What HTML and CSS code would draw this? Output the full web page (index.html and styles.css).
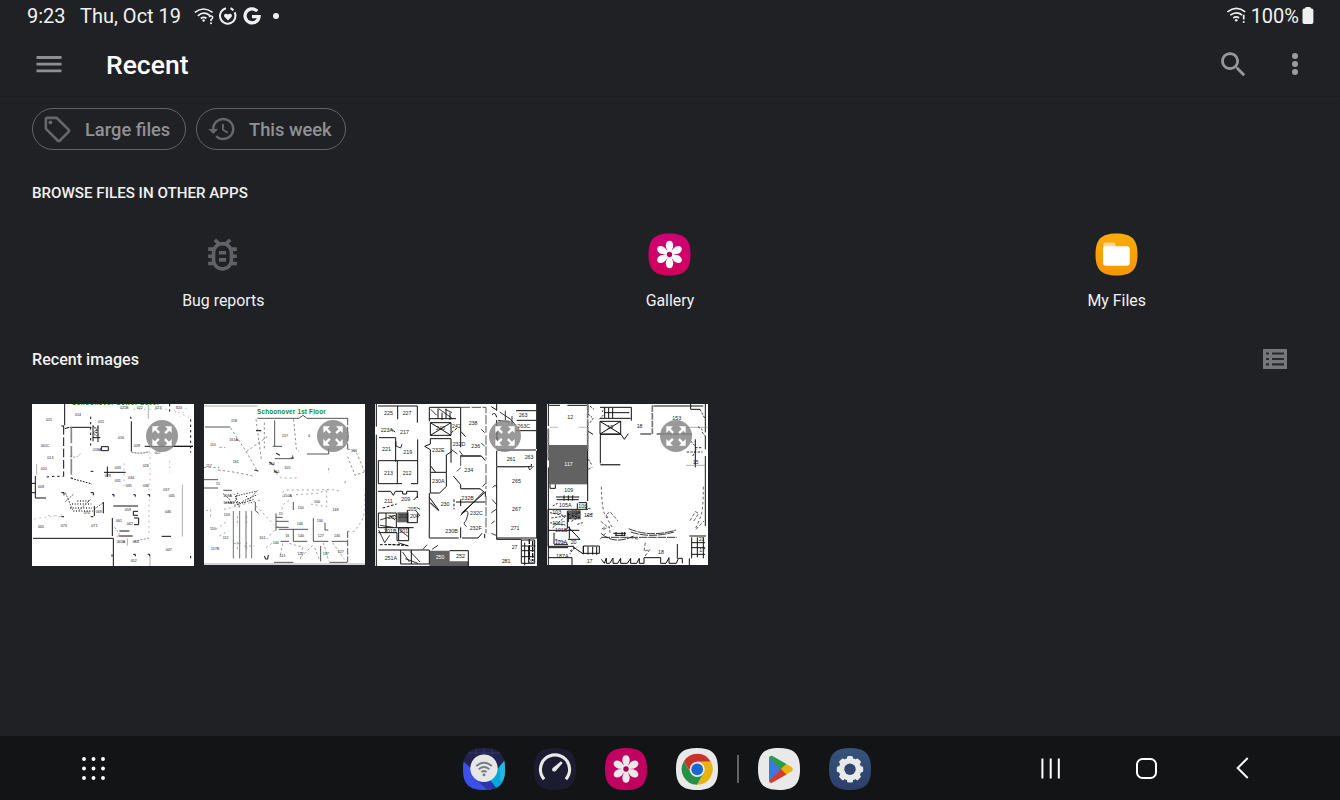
FILE: index.html
```html
<!DOCTYPE html>
<html lang="en">
<head>
<meta charset="utf-8">
<title>Recent</title>
<link rel="stylesheet" href="styles.css">
</head>
<body>
<svg class="defs" aria-hidden="true">
  <defs>
    <linearGradient id="pink" x1="0" y1="0" x2="0" y2="1"><stop offset="0" stop-color="#cf0075"/><stop offset="1" stop-color="#d0005c"/></linearGradient>
    <linearGradient id="amber" x1="0" y1="0" x2="0" y2="1"><stop offset="0" stop-color="#f9ac08"/><stop offset="1" stop-color="#f89600"/></linearGradient>
    <linearGradient id="navy" x1="0" y1="0" x2="0" y2="1"><stop offset="0" stop-color="#37547a"/><stop offset="1" stop-color="#2b3f69"/></linearGradient>
    <path id="squircle" d="M21 0C36.200 0 42 5.800 42 21S36.200 42 21 42 0 36.200 0 21 5.800 0 21 0Z"/>
    <clipPath id="squircle-clip"><use href="#squircle"/></clipPath>
    <g id="petals">
      <g id="petal-pair"><ellipse cx="21" cy="11.900" rx="3.700" ry="4.700"/><ellipse cx="21" cy="30.100" rx="3.700" ry="4.700"/><path d="M17.600 13.500L20 21h2l2.400-7.500zM17.600 28.500L20 21h2l2.400 7.500z"/></g>
      <use href="#petal-pair" transform="rotate(60 21 21)"/>
      <use href="#petal-pair" transform="rotate(120 21 21)"/>
    </g>
    <symbol id="expand" viewBox="-48 -48 96 96">
      <circle r="48" fill="#858585" fill-opacity=".84"/>
      <g id="arrow" fill="#fff"><path d="M-29-29h20l-7 7 10 10-5 5-10-10-8 8z"/></g>
      <use href="#arrow" transform="rotate(90)"/><use href="#arrow" transform="rotate(180)"/><use href="#arrow" transform="rotate(270)"/>
    </symbol>
  </defs>
</svg>

<header class="status">
  <span class="clock">9:23</span>
  <span class="date">Thu, Oct 19</span>
  <svg class="status-icons" width="90" height="22" viewBox="192 5 90 22">
    <g fill="none" stroke="#f0f0f0" stroke-width="1.700">
      <path d="M194.800 12.400Q203.500 5.600 212.600 12.400M197.800 15.800Q203.700 10.800 209.800 15.500M200.800 18.500Q203.700 16.300 206.500 18.300"/>
      <path d="M209.300 17.200q.4-1.500 1.900-1.300 1.700.3 1.500 1.700-.2 1.200-1.700 2v1.700" stroke-width="1.500"/>
      <path d="M226 8.200a7.800 7.800 0 1 0 8.700 4.100M230.500 8.300a7.800 7.800 0 0 1 2.900 2" stroke-width="2"/>
    </g>
    <g fill="#f0f0f0"><circle cx="203.600" cy="20.500" r="1.200"/><circle cx="211" cy="23.200" r="1"/><path d="M228 20.400l-3.400-3.400c-1.800-2 .9-4.800 3.400-2.500 2.500-2.300 5.200.5 3.400 2.500z"/><circle cx="276" cy="16" r="3"/></g>
    <path d="M257.200 11.100A7 7 0 1 0 259 16.700H252" fill="none" stroke="#f0f0f0" stroke-width="3.300"/>
  </svg>
  <span class="spacer"></span>
  <svg class="signal" width="22" height="20" viewBox="1225 6 22 20">
    <g fill="none" stroke="#f0f0f0" stroke-width="1.700"><path d="M1227.400 11.900Q1236.500 5 1245.200 11.900M1230.300 15.200Q1236.300 10.500 1242.100 15M1233.300 18Q1236.200 15.800 1239 18M1243.700 14.800v4.700"/></g>
    <circle cx="1236.200" cy="20.300" r="1.300" fill="#f0f0f0"/><circle cx="1243.700" cy="22" r="1" fill="#f0f0f0"/>
  </svg>
  <span class="percent">100%</span>
  <svg class="battery" width="12" height="17" viewBox="0 0 12 17"><path d="M3 1.500Q3 0 4.500 0h3Q9 0 9 1.500h.7q1.700 0 1.700 1.700v12q0 1.800-1.700 1.800H2.200Q.5 17 .5 15.200v-12q0-1.700 1.700-1.700z" fill="#f0f0f0"/></svg>
</header>

<div class="appbar">
  <svg class="menu" width="26" height="18" viewBox="0 0 26 18"><path d="M.5 2.500h25M.5 9.200h25M.5 15.800h25" stroke="#8e8f92" stroke-width="2.800"/></svg>
  <h1 class="title">Recent</h1>
  <span class="spacer"></span>
  <svg class="search" width="33" height="33" viewBox="0 0 24 24"><path fill="#97989a" d="M15.500 14h-.79l-.28-.27C15.410 12.590 16 11.110 16 9.500 16 5.910 13.090 3 9.500 3S3 5.910 3 9.500 5.910 16 9.500 16c1.610 0 3.090-.59 4.230-1.570l.27.28v.79l5 4.990L20.490 19l-4.990-5zm-6 0C7.010 14 5 11.990 5 9.500S7.010 5 9.500 5 14 7.010 14 9.500 11.990 14 9.500 14z"/></svg>
  <svg class="more" width="8" height="24" viewBox="0 0 8 24"><g fill="#9c9c9f"><circle cx="4" cy="4" r="3"/><circle cx="4" cy="12" r="3"/><circle cx="4" cy="20" r="3"/></g></svg>
</div>

<main class="content">
  <div class="chips">
    <div class="chip chip-large">
      <svg width="31" height="31" viewBox="0 0 24 24"><path fill="#66676a" d="M21.410 11.580l-9-9C12.050 2.220 11.550 2 11 2H4c-1.100 0-2 .9-2 2v7c0 .55.22 1.050.59 1.420l9 9c.36.36.86.58 1.410.58s1.050-.22 1.410-.59l7-7c.37-.36.59-.86.59-1.410s-.23-1.060-.59-1.420zM13 20.010L4 11V4h7v-.01l9 9-7 7.020z"/><circle cx="6.500" cy="6.500" r="1.500" fill="#66676a"/></svg>
      <span>Large files</span>
    </div>
    <div class="chip chip-week">
      <svg width="30" height="30" viewBox="0 0 24 24"><path fill="#66676a" d="M13 3c-4.970 0-9 4.030-9 9H1l3.890 3.890.07.14L9 12H6c0-3.870 3.130-7 7-7s7 3.130 7 7-3.130 7-7 7c-1.930 0-3.680-.79-4.940-2.060l-1.420 1.420C8.270 19.990 10.510 21 13 21c4.970 0 9-4.030 9-9s-4.030-9-9-9zm-1 5v5l4.280 2.540.72-1.210-3.500-2.080V8H12z"/></svg>
      <span>This week</span>
    </div>
  </div>

  <h2 class="section">BROWSE FILES IN OTHER APPS</h2>

  <div class="apps">
    <div class="app">
      <svg width="43" height="43" viewBox="0 0 24 24"><path fill="#5f6368" d="M20 8h-2.810c-.45-.78-1.070-1.450-1.820-1.960L17 4.410 15.590 3l-2.170 2.170C12.960 5.060 12.490 5 12 5s-.96.06-1.410.17L8.410 3 7 4.410l1.620 1.630C7.880 6.550 7.260 7.220 6.810 8H4v2h2.090c-.05.33-.09.66-.09 1v1H4v2h2v1c0 .34.04.67.09 1H4v2h2.810c1.040 1.790 2.970 3 5.190 3s4.150-1.210 5.190-3H20v-2h-2.090c.05-.33.09-.66.09-1v-1h2v-2h-2v-1c0-.34-.04-.67-.09-1H20V8zm-4 7c0 2.210-1.790 4-4 4s-4-1.790-4-4v-4c0-2.210 1.790-4 4-4s4 1.790 4 4v4zm-6-1h4v2h-4zm0-4h4v2h-4z"/></svg>
      <span class="app-name">Bug reports</span>
    </div>
    <div class="app">
      <svg width="43" height="43" viewBox="-.5 -.5 43 43"><use href="#squircle" fill="url(#pink)"/><use href="#petals" fill="#fff"/><circle cx="21" cy="21" r="2.700" fill="#b5005b"/></svg>
      <span class="app-name">Gallery</span>
    </div>
    <div class="app">
      <svg width="43" height="43" viewBox="-.5 -.5 43 43"><use href="#squircle" fill="url(#amber)"/><path d="M7.500 17v-5.500Q7.500 9 10 9h8.200Q20 9 20 11v6z" fill="#fcd78c"/><rect x="7.500" y="12.800" width="26.700" height="19.500" rx="3.200" fill="#fff"/></svg>
      <span class="app-name">My Files</span>
    </div>
  </div>

  <div class="section-row">
    <h2 class="recent-label">Recent images</h2>
    <svg width="24" height="20" viewBox="0 0 24 20"><rect width="24" height="20" rx=".6" fill="#75777a"/><path d="M3 4.500h3M3 10h3M3 15.300h3M9 4.500h12M9 10h12M9 15.300h12" stroke="#292a2e" stroke-width="2.200"/></svg>
  </div>

  <div class="thumbs">
    <div class="thumb wide">
      <svg class="plan" width="162" height="162" viewBox="24 24 486 486">
        <rect x="24" y="24" width="486" height="486" fill="#fff"/>
        <text class="plan-title" x="144" y="26" textLength="260">Schoonover Lower Level</text>
        <g fill="none" stroke="#111" stroke-width="3">
          <path d="M122 24v64M138 94h64M207 88v48M222 88v50M207 125h22M322 76v90M362 151h145M442 151h65M240 229h65M250 212v30M268 330h74M27 427h241M268 427v83M265 366v54M34 240v66h32M24 262h10M24 290h10M286 405h30M284 420h42M232 152v12h21v-12zM342 346h-14v12h14M330 366h14v20h-14M238 318v34M211 330v30M413 421h28"/>
          <path d="M119 90v152" stroke-dasharray="26 8"/>
          <path d="M142 94v154" stroke="#888" stroke-width="5" stroke-dasharray="48 8 34 4"/>
          <path d="M142 247l62 17" stroke-dasharray="5 4"/>
          <path d="M68 243l22-2h28M200 62v90M320 62l2 14M437 24v26M500 70v100M500 480v15" stroke-dasharray="7 9"/>
          <path d="M322 168q30 8 54-2M207 90l14 12-14 8 14 12M124 290l22 52M148 295l-24 22M210 340l28-20M200 310l-36 34" stroke-width="2" stroke-dasharray="6 3"/>
          <path d="M475 266v156M310 427v22M373 24v44M378 480v30M38 204v32" stroke="#888" stroke-width="2"/>
          <path d="M144 324h58M138 336h66M148 345h58M160 315h38M212 94l10 24M212 118l10-24" stroke="#444" stroke-width="4" stroke-dasharray="3 5"/>
          <path d="M30 369l92-14M72 358l45 5M378 152v110M375 262v160M437 195v34M300 202v68M328 40h110M448 42l46 22M460 30l-10 30M488 35l-20 28" stroke="#999" stroke-width="2" stroke-dasharray="5 11"/>
          <path d="M112 90h8M200 226h8M112 290h8v8M200 290h8v8M112 362h8M200 362h8M264 296h6v6M328 296h6v6M371 296h6v6M264 475v7M328 475h6v6M371 475h6v6M122 98l14-4" />
          <path d="M272 394l14 20-8 9M330 436l46-10M138 180q20 10 34-10" stroke="#666" stroke-width="2" stroke-dasharray="6 4"/>
        </g>
        <g class="lbl small"><text x="153" y="60">014</text><text x="66" y="75">021</text><text x="222" y="80">015</text><text x="51" y="153">001C</text><text x="70" y="188">013</text><text x="50" y="222">010</text><text x="42" y="276">009</text><text x="288" y="38">021B</text><text x="338" y="38">022</text><text x="394" y="38">023</text><text x="456" y="38">024</text><text x="282" y="130">016</text><text x="207" y="166">018A</text><text x="330" y="154">028</text><text x="392" y="173">027</text><text x="356" y="212">026</text><text x="272" y="219">033</text><text x="312" y="249">034</text><text x="272" y="257">031</text><text x="242" y="242">029</text><text x="305" y="272">035</text><text x="356" y="272">036</text><text x="418" y="286">037</text><text x="434" y="304">045</text><text x="302" y="346">059</text><text x="423" y="352">046</text><text x="42" y="395">005</text><text x="110" y="394">073</text><text x="202" y="393">071</text><text x="276" y="377">061</text><text x="308" y="387">062</text><text x="278" y="441">063A</text><text x="326" y="440">064</text><text x="425" y="465">047</text><text x="320" y="497">052</text><text x="179" y="355">070</text><text x="215" y="350">069</text></g>
      </svg>
      <svg class="badge" width="32" height="32"><use href="#expand"/></svg>
    </div>

    <div class="thumb">
      <svg class="plan" width="161" height="161" viewBox="24 24 483 483">
        <rect x="24" y="24" width="483" height="483" fill="#fff"/>
        <path d="M24 30h160M24 504h483" stroke="#aaa" stroke-width="3"/>
        <text class="plan-title" x="183" y="53" textLength="206">Schoonover 1st Floor</text>
        <g fill="none" stroke="#333" stroke-width="2.500">
          <path d="M184 67h125l12-9 12 9h122M236 73v78M230 151h28M236 188h54v-10M333 174h65v-17M27 93h76M24 251h42M24 276h42M82 283h26M292 318v24M248 400h88M292 400v36h42M352 366v70h45M407 436h46M374 450v46M234 499h58M400 499h54M178 318v26l10 8M240 352v52M240 376h38M240 394h38M240 364h20M387 380v22h10M254 436h25"/>
          <path d="M455 67v92M455 406v92" stroke-dasharray="20 5"/>
          <path d="M112 345v142M131 345v142M150 345v142M167 345v142" stroke="#555"/>
          <path d="M104 96l46 70 36 62M293 70l8 90 8 6M66 222q70 8 110 20M24 214h46M152 166l62-44M180 70l16 120M205 80v80M455 160q22 0 30 18l20 48M455 182l22 56 28-10" stroke="#555" stroke-width="2" stroke-dasharray="7 7"/>
          <path d="M262 304q-10-16 10-22h90q60-4 74 6M232 204q0 30 26 42h48M258 340q2-24 30-28M300 296l64-4 28-10M392 284v48l-50-8M455 406h20l22-30 10-34V284M180 330l54 56M212 430l34-40M210 455l20-15M84 340l110-28M30 344l14-4v28M60 400l30-22M70 420l28-15" stroke="#777" stroke-width="2" stroke-dasharray="6 9"/>
          <path d="M82 293l22 20M88 320h60M120 300l60-14M126 290l-10 30M150 300l20 24M140 316l44-20M115 328l60-18M130 334l-14-40M184 284l-24 26" stroke-width="3" stroke-dasharray="4 4"/>
          <path d="M124 360v30M152 360v30M124 438v25M152 438v25M112 442h26M145 450h30M260 442l-8 42M280 442l40 12-8 42M350 448l-34 34M382 440l16 55M410 440l35 50M455 150v15M398 216v15M447 262v-6h8M70 154h18M356 455l14 36" stroke="#777" stroke-width="2" stroke-dasharray="8 6"/>
          <path d="M205 480l4 9h6l2-12M240 172l12 6M220 198l10 8M235 225l10 6M175 222l12 3M180 104h16M284 186h10" stroke-width="3.500"/>
        </g>
        <g class="lbl small"><text x="105" y="78">158</text><text x="100" y="135">161A</text><text x="42" y="150">110</text><text x="110" y="202">161</text><text x="30" y="214">117</text><text x="60" y="266">15</text><text x="82" y="302">108A</text><text x="82" y="323">108AX</text><text x="258" y="122">157</text><text x="336" y="122">4</text><text x="265" y="218">105</text><text x="218" y="207">154</text><text x="232" y="231">155</text><text x="305" y="340">150</text><text x="354" y="320">100</text><text x="409" y="345">148</text><text x="302" y="386">146</text><text x="362" y="378">134</text><text x="268" y="422">16</text><text x="306" y="422">140</text><text x="365" y="422">127</text><text x="414" y="422">130</text><text x="248" y="358">15</text><text x="42" y="401">110</text><text x="80" y="430">112</text><text x="45" y="463">117B</text><text x="190" y="428">101</text><text x="230" y="444">140</text><text x="250" y="482">141</text><text x="304" y="478">122</text><text x="380" y="477">137</text><text x="425" y="472">127</text><text x="262" y="302">150A</text><text x="83" y="360">103</text><text x="465" y="168">166</text></g>
      </svg>
      <svg class="badge" width="32" height="32"><use href="#expand"/></svg>
    </div>

    <div class="thumb wide">
      <svg class="plan" width="162" height="162" viewBox="21 24 486 486">
        <rect x="21" y="24" width="486" height="486" fill="#fff"/>
        <g fill="#626262"><path d="M186 464h59v32h56v14H184z"/><rect x="88" y="349" width="34" height="30"/></g>
        <g fill="none" stroke="#111" stroke-width="3">
          <path d="M25 24v68M25 116v394M30 30h118v50M89 30v40M33 125h50v72M31 194h118v-64M31 194v69h57v-69M88 263h14M149 194v69h-20M30 286h38l8 12 6-12M82 286h22v8h12v-8h32v20M149 300l-12 12M31 351h54v44H31zM54 351v60M85 395h52M118 350v30h30v-28M31 410h56v24h35v-38h-30v38M31 462h153v42H98v-42M130 462v42M245 464h56v46M184 34h94v120M184 34v42M184 68h80M210 38v30M222 50v22M234 38v30M246 50v22M187 80h62v38h-62zM187 80l62 38M249 80l-62 38M187 128h62v72M187 128v16l-17 7 17 10v48l16 20M187 209v20h48v-52l18-12M187 229v62h28l20-20v-42M184 291v135h88M282 426h48l12-14M350 426v-12M184 304l28 38M278 106l15 16M278 180h62l12 14M256 240l22 26v12h58l14 12M352 286v16M280 352l70-62M278 358l68-70M278 394v32M264 318h88M278 310v20M386 24v20M370 32l16 10M372 56q10-10 14 8M386 72v80M386 162h118M444 44h60M446 73h58M504 104h-60M386 165v45M386 212h104v-8M506 24v135M506 164v264M386 212v218h74M386 426h118M460 432h40v70h-40zM470 440v68M482 450v50M462 450h40M462 464h38M462 482h36"/>
          <path d="M278 34h76v76M354 118v72M354 204v75M354 300v112M184 400v25M278 182v34l-12 10" stroke="#555" stroke-dasharray="28 5"/>
          <path d="M187 320l26 24M276 180h62M386 212h88M278 278h58" stroke="#444" stroke-width="4"/>
          <path d="M188 40l18 18M212 38l42 30M232 40l20 10M395 48l30 20M390 73l35 5M412 44v28M432 60v24M423 65l20 22M104 468l20 30M112 488l38 14M126 466l30 32M32 402l18 38 15-22M95 402l26 20M90 440l32 10M36 372l45-14M36 388l40 6M66 360l15 12M156 360l-12-16M156 340l-10-6M274 164l10 14M250 160l18 14M340 100l10 10M340 142l10 8M344 272l8-10M165 460l12-14M192 460l18-12M374 275q10-14 12 0M372 310l14 16M380 375l-10 8M370 350l14-10M370 412l14 6M84 136v14l14 6 4-12M70 100l12 8M480 210l5 12 12-12M286 350q14-12 14 4l-6 20q-12 8 2 18" stroke-width="2.500"/>
          <path d="M44 336l42-12M118 342v14M60 445l60 4M36 446h76M250 110l20-16M258 310v30" stroke-dasharray="8 5"/>
          <path d="M388 104v34M484 430v60M494 435v60" stroke-width="4" stroke-dasharray="14 4"/>
        </g>
        <g class="lbl"><text x="48" y="57">225</text><text x="104" y="57">227</text><text x="38" y="108">223A</text><text x="96" y="114">217</text><text x="42" y="164">221</text><text x="106" y="173">219</text><text x="48" y="237">213</text><text x="104" y="237">212</text><text x="49" y="322">211</text><text x="100" y="315">209</text><text x="119" y="344">205</text><text x="126" y="366">204</text><text x="92" y="365">202</text><text x="48" y="411">201B</text><text x="94" y="411">201</text><text x="50" y="492">251A</text><text x="302" y="87">238</text><text x="310" y="155">236</text><text x="254" y="150">232D</text><text x="192" y="169">232E</text><text x="192" y="262">230A</text><text x="289" y="228">234</text><text x="218" y="329">230</text><text x="280" y="312">232B</text><text x="306" y="358">232C</text><text x="305" y="402">232F</text><text x="232" y="412">230B</text><text x="452" y="64">263</text><text x="448" y="95">263C</text><text x="416" y="196">261</text><text x="470" y="188">263</text><text x="432" y="261">265</text><text x="432" y="344">267</text><text x="428" y="401">271</text><text x="431" y="459">27</text><text x="401" y="501">281</text><text x="264" y="486">252</text><text class="inv" x="203" y="489">250</text><text x="204" y="102">240</text><text x="60" y="370">203</text><text x="480" y="502">20</text><text x="252" y="95">242</text></g>
      </svg>
      <svg class="badge" width="32" height="32"><use href="#expand"/></svg>
    </div>

    <div class="thumb">
      <svg class="plan" width="161" height="161" viewBox="21 24 483 483">
        <rect x="21" y="24" width="483" height="483" fill="#fff"/>
        <g fill="#626262"><rect x="27" y="147" width="116" height="118"/><rect x="84" y="343" width="38" height="27"/></g>
        <g fill="none" stroke="#111" stroke-width="3">
          <path d="M24 28h36M82 28h62v22M25 24v66M25 98v95M25 214v293M143 80v235M143 105l16 10M30 265v12h16v-12M24 340h120M24 340v63h94M82 344v54M24 403v48h78M82 390l38 40h-36M88 392v36M42 410v34M42 446h42M98 452l32 22v-24h48v22h-48v-22M144 452v24M158 452v24M170 452v24M24 485h72v22M180 34h94v40M194 34v32M206 36v30M218 36v30M180 67h92M192 50h76M180 76h62v38h-62zM180 76l62 38M242 76l-62 38M181 114v88M181 206h60M181 115h62l10 15 12-17M301 114h33M340 30h150M452 24v16h28M350 114h106M466 130v84M496 24v85M496 120v40M496 180v210M448 420h50M455 424v63M490 424v63M472 424v60M455 440h40M455 455h40M455 475h40M448 487v20M412 444v44"/>
          <path d="M143 24v140M25 98v95M337 28v86" stroke="#777" stroke-width="5" stroke-dasharray="20 3"/>
          <path d="M438 208h58M438 94h65M181 208h60" stroke="#888" stroke-width="2"/>
          <path d="M184 490l9 12 6-16v16h10l10-16v16h14l9-15v15h20l10-15v15h18l8-15v15h14v-17h50v17h16l9-17v17h22l6-15h12v15"/>
          <path d="M183 412q40 36 98 8M185 424h226M266 398q65 28 142 4M272 408q60 20 130 0" stroke-width="2.500" stroke-dasharray="25 3"/>
          <path d="M184 272q2 77 14 90l22 38M490 272q0 70-8 90l-15 35" stroke-width="2" stroke-dasharray="8 7"/>
          <path d="M200 355l10-8 24 28M204 366l-6-10M450 374l16-27 10 5-16 25M468 400l24-25M182 376l18 14-16 10M190 400l18-8 2 18M180 430l18-20M270 425l28 5M316 440l-4 26 18-6-16 22" stroke="#444" stroke-width="2.500" stroke-dasharray="10 5"/>
          <path d="M30 350l48 10M34 366l42-6M30 380l46 8M38 395l40-35M46 430l36 12M90 465l20-12M104 454l-15 20M84 354l36 12M88 368l32-20M94 376l26-14M38 330l15-8M112 385l16-5M134 335l20 4M144 54l12 10M150 80l12-16M145 220l12-6M145 190l10 16M480 40l16 30M474 92l14 10M486 108l10 12M452 135l14 16M440 168h48M466 155h20M458 180l12-20M150 30l12 10M140 360l16-6M186 48l8-12M178 70l14-15" stroke-width="2.500" stroke-dasharray="7 4"/>
          <path d="M24 455h60M48 303h70M50 311h66M72 298v16M85 298v16M98 298v16M85 350v28M112 322v18M116 320h24v20"/>
          <path d="M30 94h24M116 94h24" stroke="#999" stroke-width="2"/>
          <path d="M220 412h38M226 418h30M228 408v12M246 408v12M254 408v12"/>
        </g>
        <g class="lbl"><text x="82" y="69">12</text><text class="inv" x="73" y="211">117</text><text x="73" y="288">109</text><text x="57" y="333">105A</text><text x="115" y="337">106</text><text x="94" y="355">104</text><text x="132" y="362">102</text><text x="37" y="355">103</text><text x="37" y="388">101C</text><text x="45" y="409">101B</text><text x="44" y="443">101A</text><text x="92" y="443">20</text><text x="48" y="485">187A</text><text x="140" y="502">17</text><text x="290" y="95">18</text><text x="397" y="73">153</text><text x="354" y="473">18</text><text x="202" y="98">19</text><text x="458" y="205">15</text><text x="476" y="434">21</text><text x="478" y="468">17</text></g>
      </svg>
      <svg class="badge" width="32" height="32"><use href="#expand"/></svg>
    </div>
  </div>
</main>

<nav class="navbar">
  <svg class="launcher" width="23" height="23" viewBox="0 0 23 23"><path d="M2 2h.01M11.500 2h.01M21 2h.01M2 11.500h.01M11.500 11.500h.01M21 11.500h.01M2 21h.01M11.500 21h.01M21 21h.01" stroke="#fff" stroke-width="3.900" stroke-linecap="round"/></svg>
  <div class="dock">
    <svg width="42" height="42" viewBox="0 0 42 42"><g clip-path="url(#squircle-clip)"><path d="M0 0h42v42H0z" fill="#20234d"/><path d="M5 5h32M13 0v12M21 0v8M29 0v12" stroke="#33375e"/><path d="M0 13l32 29H0z" fill="#3c50e8"/><path d="M42 12L24 33l9 9h9z" fill="#00a7d8"/><path d="M42 12l-5 6v16l5-4z" fill="#24b6dc"/><path d="M15 33l12-1 8 10H24z" fill="#2937a7"/></g><circle cx="21" cy="20.300" r="13.700" fill="#e7e7e7"/><g fill="none" stroke="#758089" stroke-width="1.900"><path d="M13.200 18q7.900-6.500 15.700 0M15.700 21.200q5.300-4.200 10.600 0M18.400 24q2.600-1.900 5.200 0"/></g><circle cx="21" cy="26.700" r="1.500" fill="#758089"/></svg>
    <svg width="42" height="42" viewBox="0 0 42 42"><use href="#squircle" fill="#1b1c30"/><path d="M10.100 31.200A14.600 14.600 0 1 1 31.900 31.200" fill="none" stroke="#e9e9e9" stroke-width="3.100"/><path d="M27 13.300l1.700 1.600-7 8.200q-1.600 1.100-3-.2-1.200-1.500 0-3z" fill="#e9e9e9"/></svg>
    <svg width="42" height="42" viewBox="0 0 42 42"><use href="#squircle" fill="#c2005f"/><use href="#petals" fill="#e9e9e9"/><circle cx="21" cy="21" r="2.700" fill="#a80055"/></svg>
    <svg width="42" height="42" viewBox="0 0 42 42"><use href="#squircle" fill="#e9e9e9"/><g transform="translate(21.200 21.300)"><path d="M-13.280-8A15.500 15.500 0 0 1 13.570-7.500H0L-6.500 3.750z" fill="#ca3128"/><path d="M13.570-7.500A15.500 15.500 0 0 1-.29 15.500L6.500 3.750 0-7.500z" fill="#e8b30b"/><path d="M-.29 15.500A15.500 15.500 0 0 1-13.280-8L-6.500 3.750H6.500z" fill="#279044"/><circle r="7.600" fill="#e9e9e9"/><circle r="5.900" fill="#1968d0"/></g></svg>
    <span class="divider"></span>
    <svg width="42" height="42" viewBox="0 0 42 42"><use href="#squircle" fill="#e9e9e9"/><path d="M11 9.500v23.800L23.500 21.300z" fill="#3d78df"/><path d="M11 10Q11.300 7 14.500 8L28.500 16 23 21.800z" fill="#2c994b"/><path d="M28.300 15.900L33.500 19q2.500 2.300 0 4.500l-5.200 3-5.600-5.200z" fill="#e6b30c"/><path d="M11 32.700l12-11.800 5.500 5.600-14 8.100Q11.500 35.700 11 32.700z" fill="#cf3c30"/></svg>
    <svg class="settings" width="42" height="42" viewBox="0 0 42 42"><use href="#squircle" fill="url(#navy)"/><g fill="#e9e9e9"><circle cx="21" cy="21.300" r="11.300"/><g id="teeth"><rect x="18" y="8.100" width="6" height="26.400" rx="1.500"/><rect x="7.800" y="18.300" width="26.400" height="6" rx="1.500"/></g><use href="#teeth" transform="rotate(45 21 21.300)"/></g><circle cx="21" cy="21.300" r="5.700" fill="#30456f"/></svg>
  </div>
  <svg class="recents" width="20" height="21" viewBox="0 0 20 21"><path d="M1.400.5v20M9.700.5v20M17.800.5v20" stroke="#fff" stroke-width="2"/></svg>
  <svg class="home" width="21" height="21" viewBox="0 0 21 21"><rect x="1" y="1" width="19" height="19" rx="5.500" fill="none" stroke="#fff" stroke-width="2"/></svg>
  <svg class="back" width="13" height="22" viewBox="0 0 13 22"><path d="M11.700 1L1.700 11l10 10" fill="none" stroke="#fff" stroke-width="2"/></svg>
</nav>
</body>
</html>
```
FILE: styles.css
```css
* { box-sizing: border-box; }
body {
  margin: 0;
  width: 1340px;
  height: 800px;
  overflow: hidden;
  display: flex;
  flex-direction: column;
  background: #202125;
  color: #f1f1f1;
  font-family: Roboto, "Liberation Sans", sans-serif;
}
svg { display: block; flex: none; }
h1, h2 { margin: 0; }
.defs { width: 0; height: 0; position: absolute; }
.spacer { flex: 1; }

.status {
  height: 32px;
  display: flex;
  align-items: center;
  padding: 0 26px 0 27px;
  font-size: 20px;
  line-height: 32px;
  white-space: nowrap;
}
.clock { width: 53px; }
.date { width: 112px; }
.signal { margin-right: 4px; }
.battery { margin: 0 0 2px 3px; }

.appbar {
  height: 65px;
  display: flex;
  align-items: center;
  padding: 0 41px 0 36px;
  border-bottom: 1px solid #1b1c20;
}
.title {
  margin-left: 44px;
  padding-top: 2px;
  font-size: 26.500px;
  font-weight: 500;
  line-height: 32px;
  color: #fff;
}
.search { margin-right: 41px; }

.content { flex: 1; padding: 11px 32px 0; }
.chips { display: flex; gap: 10px; }
.chip {
  height: 42px;
  display: flex;
  align-items: center;
  border: 1px solid #626367;
  border-radius: 21px;
  font-size: 18.300px;
  font-weight: 500;
  color: #919193;
  white-space: nowrap;
}
.chip-large { width: 154px; padding-left: 9px; gap: 12px; }
.chip-week { width: 150px; padding-left: 10px; gap: 12px; }

.section {
  margin-top: 33px;
  font-size: 15.150px;
  font-weight: 500;
  line-height: 20px;
}
.apps {
  display: grid;
  grid-template-columns: repeat(3, 1fr);
  margin: 30px -32px 0;
}
.app { display: flex; flex-direction: column; align-items: center; }
.app svg { margin-right: 1px; }
.app-name { margin-top: 15px; font-size: 15.900px; line-height: 20px; }

.section-row {
  display: flex;
  align-items: center;
  justify-content: space-between;
  height: 20px;
  margin: 38px 21px 0 0;
}
.recent-label { padding-top: 2px; font-size: 16.100px; font-weight: 500; line-height: 20px; }

.thumbs { display: flex; gap: 10px; margin-top: 35px; }
.thumb { position: relative; width: 161px; height: 162px; }
.thumb.wide { width: 162px; }
.badge { position: absolute; top: 16px; right: 16px; }
.plan { overflow: hidden; }
.plan-title { font: bold 19px "Liberation Sans", sans-serif; fill: #168a16; }
.lbl { font: 16px "Liberation Sans", sans-serif; fill: #222; }
.lbl.small { font-size: 11px; }
.lbl .inv { fill: #fff; }

.navbar {
  height: 64px;
  display: flex;
  align-items: center;
  background: #131416;
}
.launcher { margin-left: 82px; }
.dock { display: flex; align-items: center; gap: 29px; margin-left: 357.500px; padding-top: 1px; }
.divider { width: 2px; height: 28px; margin: 0 -10px; background: #626365; }
.recents { margin-left: 170.500px; }
.home { margin-left: 75px; }
.back { margin-left: 79px; }
```
